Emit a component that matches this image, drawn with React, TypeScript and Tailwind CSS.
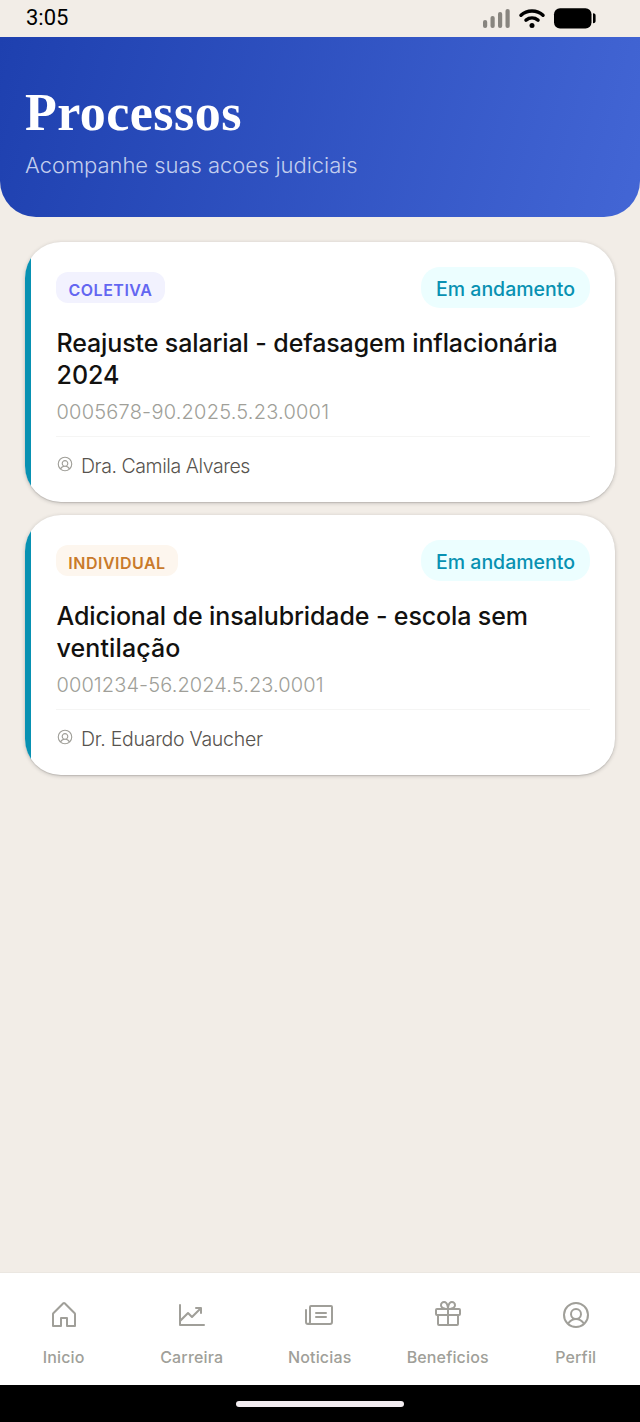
import { type IconType } from 'react-icons';
import { PiChartLineUp, PiGift, PiHouse, PiNewspaper, PiUserCircle } from 'react-icons/pi';
import { twMerge as tw } from 'tailwind-merge';

interface Process {
    kind: string;
    kindClass: string;
    status: string;
    title: string[];
    titleClass: string[];
    number: string;
    numberClass: string;
    lawyer: string;
    lawyerClass: string;
}

const processes: Process[] = [
    {
        kind: 'COLETIVA',
        kindClass: 'w-[109px] bg-[#f2f2fe] text-[#6366f1]',
        status: 'Em andamento',
        title: ['Reajuste salarial - defasagem inflacionária', '2024'],
        titleClass: ['tracking-[-0.12px]', 'tracking-[0px]'],
        number: '0005678-90.2025.5.23.0001',
        numberClass: 'tracking-[0.22px]',
        lawyer: 'Dra. Camila Alvares',
        lawyerClass: 'tracking-[-0.43px]',
    },
    {
        kind: 'INDIVIDUAL',
        kindClass: 'w-[122px] bg-[#fdf6ee] text-[#c97a2b]',
        status: 'Em andamento',
        title: ['Adicional de insalubridade - escola sem', 'ventilação'],
        titleClass: ['tracking-[-0.12px]', 'tracking-[0.12px]'],
        number: '0001234-56.2024.5.23.0001',
        numberClass: 'tracking-[0.1px]',
        lawyer: 'Dr. Eduardo Vaucher',
        lawyerClass: 'tracking-[-0.27px]',
    },
];

const tabs: { label: string; Icon: IconType }[] = [
    { label: 'Inicio', Icon: PiHouse },
    { label: 'Carreira', Icon: PiChartLineUp },
    { label: 'Noticias', Icon: PiNewspaper },
    { label: 'Beneficios', Icon: PiGift },
    { label: 'Perfil', Icon: PiUserCircle },
];

const StatusBar = () => (
    <div className="flex h-[37px] shrink-0 items-start justify-between pl-[26px] pr-[44px] text-black">
        <span className="font-['Roboto',sans-serif] text-[22px] leading-[36px]">3:05</span>
        <svg className="mt-[6px]" width="114" height="24" viewBox="482 6 114 24" fill="currentColor">
            <g fill="#88857f">
                <rect x="483" y="20" width="4.2" height="8" rx="2" />
                <rect x="490.5" y="16" width="4.2" height="12" rx="2" />
                <rect x="498" y="12" width="4.2" height="16" rx="2" />
                <rect x="505.5" y="9" width="4.2" height="19" rx="2" />
            </g>
            <g fill="none" stroke="currentColor" strokeWidth="3.5" strokeLinecap="round">
                <path d="M521 15.2C527 9.6 537 9.6 543 15.2" />
                <path d="M526 20.2C529.5 17.4 534.5 17.4 538 20.2" />
            </g>
            <circle cx="532" cy="25.4" r="2.5" />
            <rect x="554" y="8.2" width="37.5" height="20.2" rx="6" />
            <path d="M593 13.2C595 13.2 595.6 14.4 595.6 15.6V20.8C595.6 22 595 23.2 593 23.2Z" />
        </svg>
    </div>
);

const ProcessCard = ({ process }: { process: Process }) => (
    <article className="flex h-[260px] overflow-hidden rounded-[36px] bg-white shadow-[0_1px_4px_rgba(0,0,0,0.2),0_1px_1px_rgba(0,0,0,0.1)]">
        <div className="w-[6.4px] shrink-0 bg-[#0891b2]" />
        <div className="flex grow flex-col pl-[24.6px] pr-[25px] pt-[25px]">
            <div className="flex h-[41px] items-center justify-between">
                <span
                    className={tw(
                        'flex h-[31px] items-center justify-center rounded-[12px] pt-[4px] text-[16px] font-semibold tracking-[0.5px]',
                        process.kindClass,
                    )}
                >
                    {process.kind}
                </span>
                <span className="flex h-[41px] w-[169px] items-center justify-center rounded-[19px] bg-[#ecfeff] pt-[5px] text-[19.5px] font-medium text-[#0891b2]">
                    {process.status}
                </span>
            </div>
            <h2 className="mt-[20px] pl-[0.5px] text-[25px] font-medium leading-[31.5px] text-[#12110f]">
                {process.title.map((line, i) => (
                    <span key={line} className={tw('block whitespace-nowrap', process.titleClass[i])}>
                        {line}
                    </span>
                ))}
            </h2>
            <p className={tw('mt-[8px] pl-[0.5px] text-[20px] font-light leading-[26px] text-[#a09f99]', process.numberClass)}>
                {process.number}
            </p>
            <div className="mt-[10.5px] h-px shrink-0 bg-[#f5f5f4]" />
            <div className="mt-[15px] flex h-[28px] gap-[6.5px] pl-[0.5px] text-[#a09f99]">
                <PiUserCircle className="mt-[3px] size-[18px] shrink-0" />
                <span className={tw('text-[19.5px] font-light leading-[28px] text-[#57534e]', process.lawyerClass)}>
                    {process.lawyer}
                </span>
            </div>
        </div>
    </article>
);

const App = () => {
    return (
        <div className="flex h-[1422px] w-[640px] flex-col overflow-hidden bg-[#f2ede7] font-['Inter','Open_Sans',sans-serif]">
            <StatusBar />
            <header className="h-[180px] shrink-0 rounded-b-[36px] bg-[linear-gradient(105.7deg,#1e40af_0%,#4366d5_100%)] pl-[25px]">
                <h1 className="mt-[47px] font-['Liberation_Serif',serif] text-[52px] font-bold leading-[58px] tracking-[0.45px] text-white">
                    Processos
                </h1>
                <p className="mt-[9px] text-[22px] font-light leading-[28px] tracking-[-0.04px] text-[#c3ceee]">
                    Acompanhe suas acoes judiciais
                </p>
            </header>
            <main className="flex grow flex-col gap-[13px] px-[25px] pt-[25px]">
                {processes.map((process) => (
                    <ProcessCard key={process.number} process={process} />
                ))}
            </main>
            <nav className="flex h-[113px] shrink-0 border-t border-[#ebe7e1] bg-white">
                {tabs.map(({ label, Icon }) => (
                    <div key={label} className="flex w-[128px] flex-col items-center pr-[0.6px] pt-[26px] text-[#a09f99]">
                        <Icon className="size-[32px]" />
                        <span className="mt-[14px] text-[16px] font-medium leading-[24px] tracking-[0.15px]">
                            {label}
                        </span>
                    </div>
                ))}
            </nav>
            <div className="flex h-[37px] shrink-0 items-center justify-center bg-black">
                <div className="h-[6px] w-[168px] rounded-full bg-[#f3edf1]" />
            </div>
        </div>
    );
};

export default App;
